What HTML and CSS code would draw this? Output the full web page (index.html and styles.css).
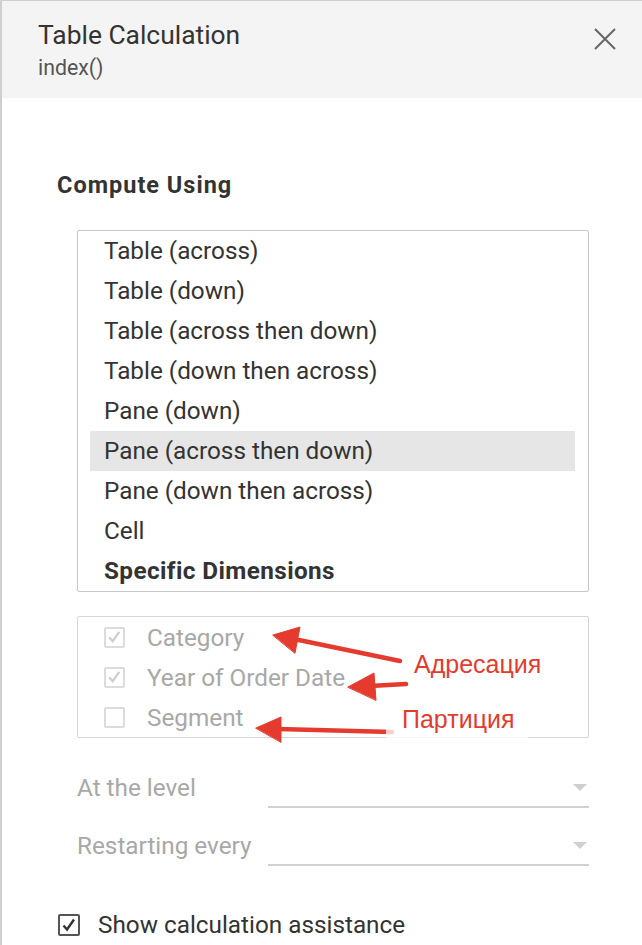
FILE: index.html
```html
<!DOCTYPE html>
<html>
<head>
<meta charset="utf-8">
<link rel="stylesheet" href="styles.css">
</head>
<body>
<div class="panel">
  <div class="header">
    <div class="titles">
      <div class="title">Table Calculation</div>
      <div class="subtitle">index()</div>
    </div>
    <svg class="close" width="22" height="22" viewBox="0 0 22 22"><path d="M1 1 L21 21 M21 1 L1 21" stroke="#666" stroke-width="2" fill="none"/></svg>
  </div>
  <div class="content">
    <div class="section-title">Compute Using</div>
    <div class="listbox">
      <div class="item">Table (across)</div>
      <div class="item">Table (down)</div>
      <div class="item">Table (across then down)</div>
      <div class="item">Table (down then across)</div>
      <div class="item">Pane (down)</div>
      <div class="item selected">Pane (across then down)</div>
      <div class="item">Pane (down then across)</div>
      <div class="item">Cell</div>
      <div class="item bold">Specific Dimensions</div>
    </div>
    <div class="dimbox">
      <div class="dim"><span class="cb disabled"><svg width="18" height="18" viewBox="0 0 18 18"><path d="M3.5 9.5 L7 13.5 L14 3.5" stroke="#cdcdcd" stroke-width="2.4" fill="none"/></svg></span><span>Category</span></div>
      <div class="dim"><span class="cb disabled"><svg width="18" height="18" viewBox="0 0 18 18"><path d="M3.5 9.5 L7 13.5 L14 3.5" stroke="#cdcdcd" stroke-width="2.4" fill="none"/></svg></span><span>Year of Order Date</span></div>
      <div class="dim"><span class="cb disabled"></span><span>Segment</span></div>
    </div>
    <div class="field">
      <span class="field-label">At the level</span>
      <div class="select"><span class="caret"></span></div>
    </div>
    <div class="field second">
      <span class="field-label">Restarting every</span>
      <div class="select"><span class="caret"></span></div>
    </div>
    <div class="assist">
      <span class="cb enabled"><svg width="18" height="18" viewBox="0 0 18 18"><path d="M3.5 9.5 L7 13.5 L14 3.5" stroke="#333" stroke-width="2.4" fill="none"/></svg></span>
      <span>Show calculation assistance</span>
    </div>
  </div>
  <svg class="arrows" width="642" height="945" viewBox="0 0 642 945">
    <g fill="#e53b2f" stroke="#e53b2f" stroke-linecap="round">
      <line x1="398" y1="660" x2="292" y2="638" stroke-width="4.5"/>
      <polygon points="271,634 298,626 293,652" stroke-width="1"/>
      <line x1="404" y1="683" x2="368" y2="685" stroke-width="4.5"/>
      <polygon points="346,686 372,672 374,699" stroke-width="1"/>
      <line x1="390" y1="731" x2="276" y2="728" stroke-width="4.5"/>
      <polygon points="254,727 279,716 279,741" stroke-width="1"/>
    </g>
  </svg>
  <div class="note note-a">Адресация</div>
  <div class="note note-p">Партиция</div>
</div>
</body>
</html>
```

FILE: styles.css
```css
* { box-sizing: border-box; }
html, body { margin: 0; padding: 0; background: #fff; }
body {
  font-family: Roboto, "Noto Sans", sans-serif;
  color: #333;
  width: 642px;
  height: 945px;
  overflow: hidden;
}
.panel {
  position: relative;
  height: 945px;
  border-left: 2px solid #cfcfcf;
  border-top: 1px solid #cfcfcf;
}
.header {
  background: #f4f4f4;
  height: 97px;
  display: flex;
  justify-content: space-between;
  align-items: flex-start;
  padding: 17px 26px 0 36px;
}
.title {
  font-size: 26.4px;
  line-height: 34px;
  color: #333;
}
.subtitle {
  font-size: 21.3px;
  line-height: 32px;
  color: #555;
}
.close { margin-top: 10px; }
.content {
  padding: 71px 0 0 55px;
  width: 587px;
}
.section-title {
  font-size: 23.5px;
  font-weight: 700;
  letter-spacing: 1px;
  line-height: 32px;
  color: #333;
}
.listbox {
  margin: 29px 0 0 20px;
  border: 1px solid #c8c8c8;
  border-radius: 2px;
  padding: 0 13px 0 12px;
}
.item {
  height: 40px;
  line-height: 40px;
  font-size: 24.3px;
  padding-left: 14px;
  color: #333;
}
.item.selected { background: #e6e6e6; }
.item.bold { font-weight: 700; letter-spacing: 0.4px; }
.dimbox {
  margin: 24px 0 0 20px;
  border: 1px solid #d6d6d6;
  border-radius: 2px;
  padding: 0 0 0 26px;
}
.dim {
  height: 40px;
  display: flex;
  align-items: center;
  font-size: 24.3px;
  color: #a8a8a8;
}
.cb {
  width: 21px;
  height: 21px;
  flex: none;
  display: inline-flex;
  align-items: center;
  justify-content: center;
  margin-right: 22px;
}
.cb.disabled { border: 2px solid #dcdcdc; border-radius: 2px; }
.cb.enabled { width: 22px; height: 22px; border: 2px solid #555; border-radius: 2px; margin-right: 18px; }
.field {
  margin: 32px 0 0 20px;
  display: flex;
  align-items: flex-start;
  height: 40px;
}
.field.second { margin-top: 18px; }
.field-label {
  width: 191px;
  font-size: 24.3px;
  line-height: 36px;
  color: #a8a8a8;
}
.select {
  flex: 1;
  height: 38px;
  border-bottom: 2px solid #d0d0d0;
  position: relative;
}
.caret {
  position: absolute;
  right: 2px;
  top: 14px;
  width: 0;
  height: 0;
  border-left: 7px solid transparent;
  border-right: 7px solid transparent;
  border-top: 7px solid #cfcfcf;
}
.assist {
  margin-top: 42px;
  height: 30px;
  display: flex;
  align-items: center;
  font-size: 24.3px;
  line-height: 30px;
  color: #333;
  padding-left: 1px;
}
.arrows { position: absolute; left: 0; top: 0; pointer-events: none; }
.note {
  position: absolute;
  font-family: "Liberation Sans", Arial, sans-serif;
  font-size: 25px;
  line-height: 28px;
  color: #e53b2f;
  background: rgba(255,255,255,0.75);
  padding: 0 4px;
}
.note-a { left: 408px; top: 649px; }
.note-p { left: 384px; top: 704px; padding: 0 14px 5px 16px; }
```
